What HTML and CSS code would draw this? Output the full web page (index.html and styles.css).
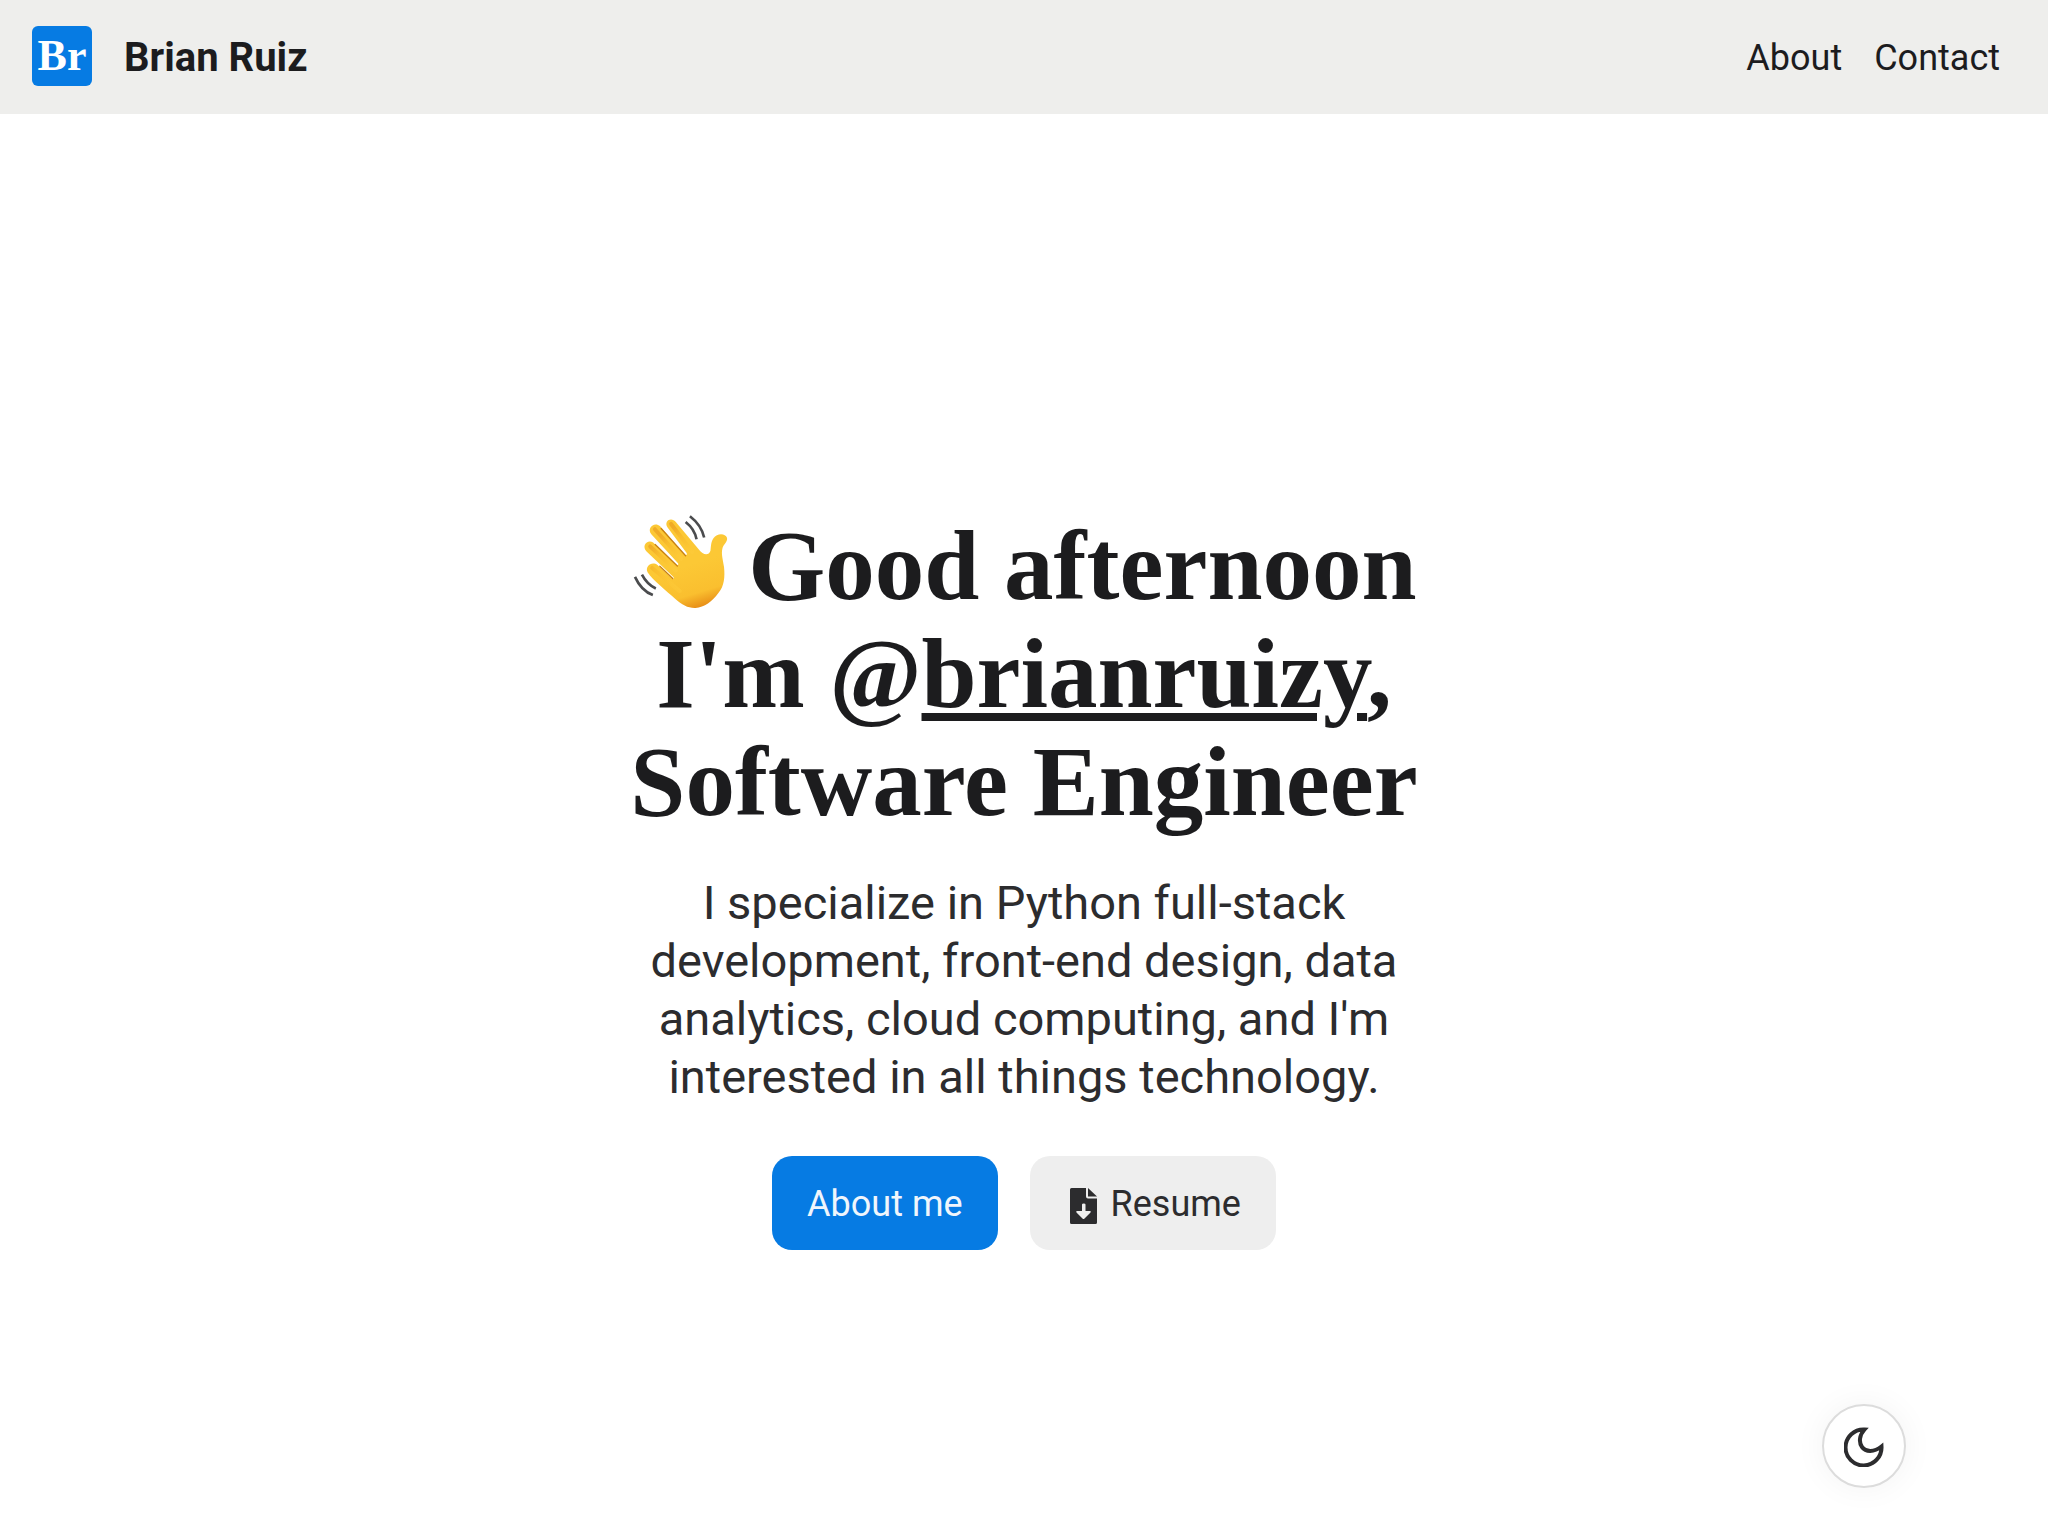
FILE: index.html
```html
<!DOCTYPE html>
<html lang="en">
<head>
<meta charset="utf-8">
<meta name="viewport" content="width=device-width, initial-scale=1">
<title>Brian Ruiz</title>
<link rel="stylesheet" href="styles.css">
</head>
<body>
<header class="site-header">
  <a class="brand" href="#">
    <span class="brand-logo" aria-hidden="true">Br</span>
    <span class="brand-name">Brian Ruiz</span>
  </a>
  <nav class="site-nav">
    <a href="#about">About</a>
    <a href="#contact">Contact</a>
  </nav>
</header>
<main class="hero">
  <h1 class="hero-title">
    <svg class="wave" viewBox="60 46 290 290" role="img" aria-label="Waving hand">
      <defs>
        <radialGradient id="skin" gradientUnits="userSpaceOnUse" cx="245" cy="225" r="150">
          <stop offset="0" stop-color="#ffd54f"/>
          <stop offset=".5" stop-color="#fdc836"/>
          <stop offset=".78" stop-color="#f7b728"/>
          <stop offset="1" stop-color="#e8981c"/>
        </radialGradient>
        <linearGradient id="palm" gradientUnits="userSpaceOnUse" x1="230" y1="200" x2="270" y2="330">
          <stop offset="0" stop-color="#fcc835"/>
          <stop offset=".65" stop-color="#fabf2f"/>
          <stop offset="1" stop-color="#e68a15"/>
        </linearGradient>
      </defs>
      <path fill="url(#palm)" d="M107 222C98 203 121 187 137 200L181 241C184 244 188 240 185 236L104 159C88 142 106 121 124 132L193 200C197 204 202 200 199 195L119 108C103 89 127 68 145 83L218 168C222 173 228 170 225 164L167 86C155 66 180 53 193 71L262 153C274 170 292 173 297 157C299 144 298 130 306 119C317 103 342 103 347 118C350 130 335 139 333 151C329 166 335 186 338 206C341 236 339 263 321 285C303 310 278 329 252 330C230 331 211 321 191 303C161 275 124 247 107 222Z"/>
      <path fill="none" stroke="#c98212" stroke-width="4" stroke-linecap="round" d="M144 204L183 241M130 138L197 203M148 90L222 172"/>
      <path fill="none" stroke="url(#skin)" stroke-width="12" stroke-linecap="round" opacity=".6" d="M121 209L204 279M115 144L192 216M129 92L208 181M178 76L242 160"/>
      <path fill="none" stroke="#4b4c4e" stroke-width="8" d="M222 70Q249 91 255 122M235 53Q269 79 278 117M90 229Q105 258 132 271M69 236Q88 278 123 291"/>
    </svg>
    Good afternoon<br>
    I'm @<a href="#profile">brianruizy</a>,<br>
    Software Engineer
  </h1>
  <p class="hero-text">I specialize in Python full-stack development, front-end design, data analytics, cloud computing, and I'm interested in all things technology.</p>
  <div class="actions">
    <a class="button button-primary" href="#about">About me</a>
    <a class="button button-muted" href="#resume">
      <svg class="file-icon" viewBox="0 0 27 36" aria-hidden="true">
        <path fill="currentColor" fill-rule="evenodd" d="M1.500 0H16V8.500Q16 10.500 18 10.500H27V34.500Q27 36 25.500 36H1.500Q0 36 0 34.500V1.500Q0 0 1.500 0ZM12 16.500V23H7Q5.500 23 6.500 24.500L12.500 30.500Q13.500 31.500 14.500 30.500L20.500 24.500Q21.500 23 20 23H15.500V16.500Q15.500 15.500 13.800 15.500Q12 15.500 12 16.500Z"/>
        <path fill="currentColor" d="M18 0L27 8.500H18Z"/>
      </svg>
      Resume
    </a>
  </div>
</main>
<button class="theme-toggle" type="button" aria-label="Switch to dark theme">
  <svg class="moon-icon" viewBox="0 0 40 40" aria-hidden="true">
    <path fill="none" stroke="currentColor" stroke-width="4" d="M20.500 2.500A18 18 0 1 0 37.500 19.500C30 25.500 21.500 25 18 20C14.500 15 15.500 8 20.500 2.500Z"/>
  </svg>
</button>
</body>
</html>
```
FILE: styles.css
```css
*, *::before, *::after { box-sizing: border-box; }

body {
  margin: 0;
  min-height: 100vh;
  display: flex;
  flex-direction: column;
  background: #fff;
  color: #1c1c1e;
  font-family: Roboto, "Liberation Sans", sans-serif;
  font-size: 36px;
}

a { color: inherit; text-decoration: none; }

.site-header {
  display: flex;
  align-items: flex-start;
  justify-content: space-between;
  padding: 26px 48px 24px 32px;
  background: #eeeeec;
  line-height: 64px;
}

.brand { display: flex; align-items: flex-start; gap: 32px; }

.brand-logo {
  display: flex;
  align-items: center;
  justify-content: center;
  width: 60px;
  height: 60px;
  border-radius: 6px;
  background: #067be3;
  color: #fff;
  font: bold 44px/60px "Liberation Serif", serif;
}

.brand-name { font-size: 40px; font-weight: 700; }

.site-nav { display: flex; gap: 32px; }

.hero {
  flex: 1;
  display: flex;
  flex-direction: column;
  align-items: center;
  justify-content: center;
  padding: 112px 32px 0;
  text-align: center;
}

.hero-title {
  margin: 0 0 38px;
  font: bold 99px/108px "Liberation Serif", serif;
}

.hero-title a {
  text-decoration: underline;
  text-decoration-thickness: 8px;
  text-underline-offset: 6px;
}

.wave { width: 96px; height: 96px; margin-right: -4px; vertical-align: -11px; }

.hero-text {
  max-width: 768px;
  margin: 0 0 50px;
  color: #2c2c2e;
  font-size: 47px;
  line-height: 58px;
}

.actions { display: flex; gap: 32px; }

.button {
  display: flex;
  align-items: center;
  gap: 14px;
  padding: 21px 35px 19px;
  border-radius: 20px;
  line-height: 54px;
}

.button-primary { background: #067be3; color: #f0f6fc; }
.button-muted { padding-left: 40px; background: #eee; color: #2c2c2e; }

.file-icon { width: 27px; height: 36px; margin-top: 4px; }

.theme-toggle {
  position: fixed;
  right: 142px;
  bottom: 48px;
  display: flex;
  align-items: center;
  justify-content: center;
  width: 84px;
  height: 84px;
  padding: 2px 0 0;
  border: 2px solid #dcdcdc;
  border-radius: 50%;
  background: #fff;
  color: #2c2c2e;
  box-shadow: 0 0 32px rgba(0, 0, 0, .05);
}

.moon-icon { width: 40px; height: 40px; }
```
